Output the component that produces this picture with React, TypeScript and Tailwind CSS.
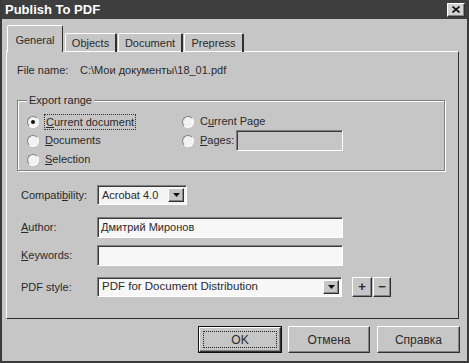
import React from "react";

const raised =
  "border border-t-white border-l-white border-r-[#303030] border-b-[#303030] shadow-[inset_-1px_-1px_0_#858585]";
const sunken =
  "border border-t-[#808080] border-l-[#808080] border-r-white border-b-white shadow-[inset_1px_1px_0_#3a3a3a]";

function Radio({ checked }: { checked?: boolean }) {
  return (
    <div className="w-[12px] h-[12px] rounded-full bg-[#f2f2f2] border border-t-[#808080] border-l-[#808080] border-r-white border-b-white flex items-center justify-center shrink-0">
      {checked && <div className="w-[4px] h-[4px] rounded-full bg-[#111]" />}
    </div>
  );
}

function DropBtn() {
  return (
    <div className={`w-[16px] h-full bg-[#c6c6c6] ${raised} flex items-center justify-center shrink-0`}>
      <svg width="7" height="4" viewBox="0 0 7 4">
        <path d="M0 0h7L3.5 4z" fill="#111" />
      </svg>
    </div>
  );
}

function Btn({ children, def }: { children: React.ReactNode; def?: boolean }) {
  if (def) {
    return (
      <div className="w-[84px] h-[27px] border border-[#111] flex">
        <div className={`flex-1 ${raised} flex items-center justify-center p-[3px]`}>
          <div className="w-full h-full border border-dotted border-[#222] flex items-center justify-center text-[12px]">
            {children}
          </div>
        </div>
      </div>
    );
  }
  return (
    <div className={`h-[27px] ${raised} flex items-center justify-center text-[12px]`}>{children}</div>
  );
}

export default function App() {
  return (
    <div className="w-[469px] h-[363px] bg-[#c6c6c6] border-x-2 border-b-2 border-[#3a3a3a] flex flex-col text-[11px] text-[#2a2a2a] font-['Liberation_Sans',Arial,sans-serif]">
      {/* Title bar */}
      <div className="h-[19px] bg-[#3e3e3e] flex items-center justify-between pl-[3px] pr-[2px] shrink-0">
        <span className="text-white font-bold text-[13px] leading-none">Publish To PDF</span>
        <div className={`w-[18px] h-[14px] bg-[#d2d2d2] ${raised} flex items-center justify-center`}>
          <svg width="8" height="7" viewBox="0 0 8 7">
            <path d="M0.5 0.5l7 6M7.5 0.5l-7 6" stroke="#111" strokeWidth="1.6" />
          </svg>
        </div>
      </div>

      {/* Tabs */}
      <div className="relative z-10 flex items-end ml-[5px] mt-[6px] h-[27px] -mb-px">
        <div className="w-[56px] h-[27px] bg-[#c6c6c6] border-t border-l border-white border-r border-r-[#303030] rounded-t-[2px] flex items-start justify-center pt-[6px]">
          General
        </div>
        <div className="ml-[2px] w-[52px] h-[19px] border-t border-l border-white border-r-2 border-r-[#303030] rounded-t-[2px] flex items-start justify-center pt-[1px]">
          Objects
        </div>
        <div className="ml-[1px] w-[65px] h-[19px] border-t border-l border-white border-r-2 border-r-[#303030] rounded-t-[2px] flex items-start justify-center pt-[1px]">
          Document
        </div>
        <div className="ml-[1px] w-[60px] h-[19px] border-t border-l border-white border-r-2 border-r-[#303030] rounded-t-[2px] flex items-start justify-center pt-[1px]">
          Prepress
        </div>
      </div>

      {/* Panel */}
      <div className="ml-[4px] w-[453px] h-[268px] border border-t-white border-l-white border-r-[#303030] border-b-[#303030] flex flex-col shrink-0">
        {/* File name */}
        <div className="mt-[11px] h-[14px] flex items-center pl-[10px]">
          <span className="w-[63px]">File name:</span>
          <span>C:\Мои документы\18_01.pdf</span>
        </div>

        {/* Export range group */}
        <div className="relative mt-[23px] ml-[10px] w-[428px] h-[71px] border border-[#808080] shadow-[inset_1px_1px_0_#fff,1px_1px_0_#fff] pt-[11px] pl-[9px] flex flex-col">
          <span className="absolute -top-[8px] left-[9px] px-[2px] bg-[#c6c6c6] leading-[14px]">Export range</span>
          <div className="h-[19px] flex items-center">
            <div className="w-[155px] flex items-center">
              <Radio checked />
              <span className="ml-[5px] px-[1px] leading-[14px] border border-dotted border-[#333]">
                <u>C</u>urrent document
              </span>
            </div>
            <div className="flex items-center">
              <Radio />
              <span className="ml-[6px]">
                C<u>u</u>rrent Page
              </span>
            </div>
          </div>
          <div className="h-[19px] flex items-center">
            <div className="w-[155px] flex items-center">
              <Radio />
              <span className="ml-[6px]">
                <u>D</u>ocuments
              </span>
            </div>
            <div className="flex items-center">
              <Radio />
              <span className="ml-[6px] w-[36px]">
                <u>P</u>ages:
              </span>
              <div className={`w-[107px] h-[21px] bg-[#c6c6c6] ${sunken}`} />
            </div>
          </div>
          <div className="h-[19px] flex items-center">
            <Radio />
            <span className="ml-[6px]">
              <u>S</u>election
            </span>
          </div>
        </div>

        {/* Compatibility */}
        <div className="mt-[14px] h-[20px] flex items-center pl-[14px]">
          <span className="w-[76px]">Compati<u>b</u>ility:</span>
          <div className={`w-[90px] h-full bg-[#f4f4f4] ${sunken} flex items-center p-[2px]`}>
            <span className="flex-1 pl-[2px]">Acrobat 4.0</span>
            <DropBtn />
          </div>
        </div>

        {/* Author */}
        <div className="mt-[12px] h-[21px] flex items-center pl-[14px]">
          <span className="w-[76px]">
            <u>A</u>uthor:
          </span>
          <div className={`w-[246px] h-full bg-[#f7f7f7] ${sunken} flex items-center pl-[3px]`}>
            Дмитрий Миронов
          </div>
        </div>

        {/* Keywords */}
        <div className="mt-[7px] h-[21px] flex items-center pl-[14px]">
          <span className="w-[76px]">
            <u>K</u>eywords:
          </span>
          <div className={`w-[246px] h-full bg-[#f7f7f7] ${sunken}`} />
        </div>

        {/* PDF style */}
        <div className="mt-[11px] h-[20px] flex items-center pl-[14px]">
          <span className="w-[76px]">PDF style:</span>
          <div className={`w-[245px] h-full bg-[#f7f7f7] ${sunken} flex items-center p-[2px]`}>
            <span className="flex-1 pl-[2px] text-[11.5px]">PDF for Document Distribution</span>
            <DropBtn />
          </div>
          <div className={`ml-[10px] w-[20px] h-full ${raised} flex items-center justify-center font-bold text-[13px]`}>+</div>
          <div className={`ml-[1px] w-[18px] h-full ${raised} flex items-center justify-center font-bold text-[13px]`}>−</div>
        </div>
      </div>

      {/* Bottom buttons */}
      <div className="mt-[7px] flex justify-end pr-[7px]">
        <Btn def>OK</Btn>
        <div className="ml-[6px] w-[82px]">
          <Btn>Отмена</Btn>
        </div>
        <div className="ml-[7px] w-[83px]">
          <Btn>Справка</Btn>
        </div>
      </div>
    </div>
  );
}
